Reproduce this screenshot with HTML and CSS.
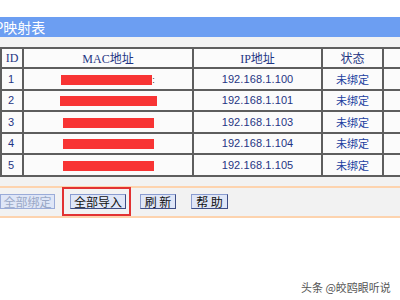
FILE: index.html
```html
<!DOCTYPE html>
<html lang="zh-CN">
<head>
  <meta charset="UTF-8" />
  <meta name="viewport" content="width=device-width, initial-scale=1.0" />
  <title>ARP映射表</title>
  <link rel="stylesheet" href="styles.css">
</head>
<body>
  <div class="top-gap"></div>
  <div class="panel">
    <div class="title"><span class="title-text">ARP映射表</span></div>
    <div class="table-wrap">
      <table class="arp-table">
        <colgroup>
          <col class="c-id">
          <col class="c-mac">
          <col class="c-ip">
          <col class="c-state">
          <col class="c-op">
        </colgroup>
        <tr class="head-row">
          <th>ID</th>
          <th>MAC地址</th>
          <th>IP地址</th>
          <th>状态</th>
          <th></th>
        </tr>
        <tr>
          <td class="num">1</td>
          <td class="mac"><span class="mask"></span><span class="dot">:</span></td>
          <td class="ip">192.168.1.100</td>
          <td class="state">未绑定</td>
          <td></td>
        </tr>
        <tr>
          <td class="num">2</td>
          <td class="mac"><span class="mask wide"></span></td>
          <td class="ip">192.168.1.101</td>
          <td class="state">未绑定</td>
          <td></td>
        </tr>
        <tr>
          <td class="num">3</td>
          <td class="mac"><span class="mask"></span></td>
          <td class="ip">192.168.1.103</td>
          <td class="state">未绑定</td>
          <td></td>
        </tr>
        <tr>
          <td class="num">4</td>
          <td class="mac"><span class="mask"></span></td>
          <td class="ip">192.168.1.104</td>
          <td class="state">未绑定</td>
          <td></td>
        </tr>
        <tr>
          <td class="num">5</td>
          <td class="mac"><span class="mask"></span></td>
          <td class="ip">192.168.1.105</td>
          <td class="state">未绑定</td>
          <td></td>
        </tr>
      </table>
    </div>
    <div class="actions">
      <button class="btn btn-bind" disabled>全部绑定</button>
      <span class="mark"><button class="btn btn-import">全部导入</button></span>
      <button class="btn btn-refresh">刷 新</button>
      <button class="btn btn-help">帮 助</button>
    </div>
  </div>
  <div class="watermark">头条 @皎鸥眼听说</div>
</body>
</html>
```

FILE: styles.css
```css
html, body {
  margin: 0;
  padding: 0;
  width: 400px;
  height: 300px;
  overflow: hidden;
  background: #fff;
  font-family: "Liberation Sans", "Noto Sans CJK SC", sans-serif;
}
.top-gap {
  height: 17px;
}
.panel {
  background: #f2f2f2;
}
.title {
  height: 20px;
  line-height: 20px;
  background: #6c9ef2;
  color: #fff;
  font-size: 14px;
  white-space: nowrap;
  overflow: hidden;
}
.title-text {
  display: inline-block;
  margin-left: -23px;
  font-family: "Noto Sans CJK SC", sans-serif;
}
.table-wrap {
  padding-top: 10px;
  padding-bottom: 9px;
}
.arp-table {
  border-collapse: collapse;
  table-layout: fixed;
  width: 440px;
  background: #fbfbfb;
}
.c-id { width: 22px; }
.c-mac { width: 170px; }
.c-ip { width: 129px; }
.c-state { width: 61px; }
.c-op { width: 58px; }
.arp-table th,
.arp-table td {
  border: 2px solid #5e5e5e;
  padding: 0;
  text-align: center;
  color: #1f3583;
  white-space: nowrap;
  overflow: hidden;
}
.arp-table th {
  height: 16px;
  font-weight: normal;
  font-size: 12px;
  font-family: "Liberation Serif", "Noto Sans CJK SC", serif;
}
.arp-table td {
  height: 19.5px;
  font-size: 11px;
}
.arp-table .num {
  text-align: left;
  padding-left: 6px;
}
.arp-table .ip {
  letter-spacing: 0.1px;
}
.arp-table .state {
  font-size: 11px;
  font-family: "Noto Sans CJK SC", sans-serif;
  color: #2140a0;
}
.mask {
  display: inline-block;
  width: 91px;
  height: 10px;
  background: #f83434;
  vertical-align: middle;
}
.mask.wide {
  width: 97px;
}
.dot {
  color: #333;
  font-size: 9px;
}
.actions {
  display: flex;
  align-items: center;
  height: 28px;
  border-top: 2px solid #fdd3ae;
  border-bottom: 2px solid #fdd3ae;
}
.btn {
  font-family: "Noto Sans CJK SC", sans-serif;
  font-size: 12px;
  line-height: 12px;
  height: 15px;
  padding: 0 2px;
  background: #dfe6f7;
  color: #111;
  border: 1px solid #3d4c84;
  border-top-color: #8a9cd0;
  border-left-color: #8a9cd0;
}
.btn-bind {
  width: 55px;
  color: #9aa8c6;
  border-color: #9aabd8;
}
.mark {
  display: flex;
  align-items: center;
  margin-left: 7px;
  height: 25px;
  padding: 0 3px 0 6px;
  border: 2px solid #e23232;
}
.btn-import {
  width: 56px;
}
.btn-refresh {
  width: 36px;
  margin-left: 9px;
}
.btn-help {
  width: 37px;
  margin-left: 15px;
}
.watermark {
  position: absolute;
  left: 301px;
  top: 279px;
  font-family: "Noto Sans CJK SC", sans-serif;
  font-size: 11px;
  color: #555;
  text-shadow: 0 0 1px #fff;
}
```
